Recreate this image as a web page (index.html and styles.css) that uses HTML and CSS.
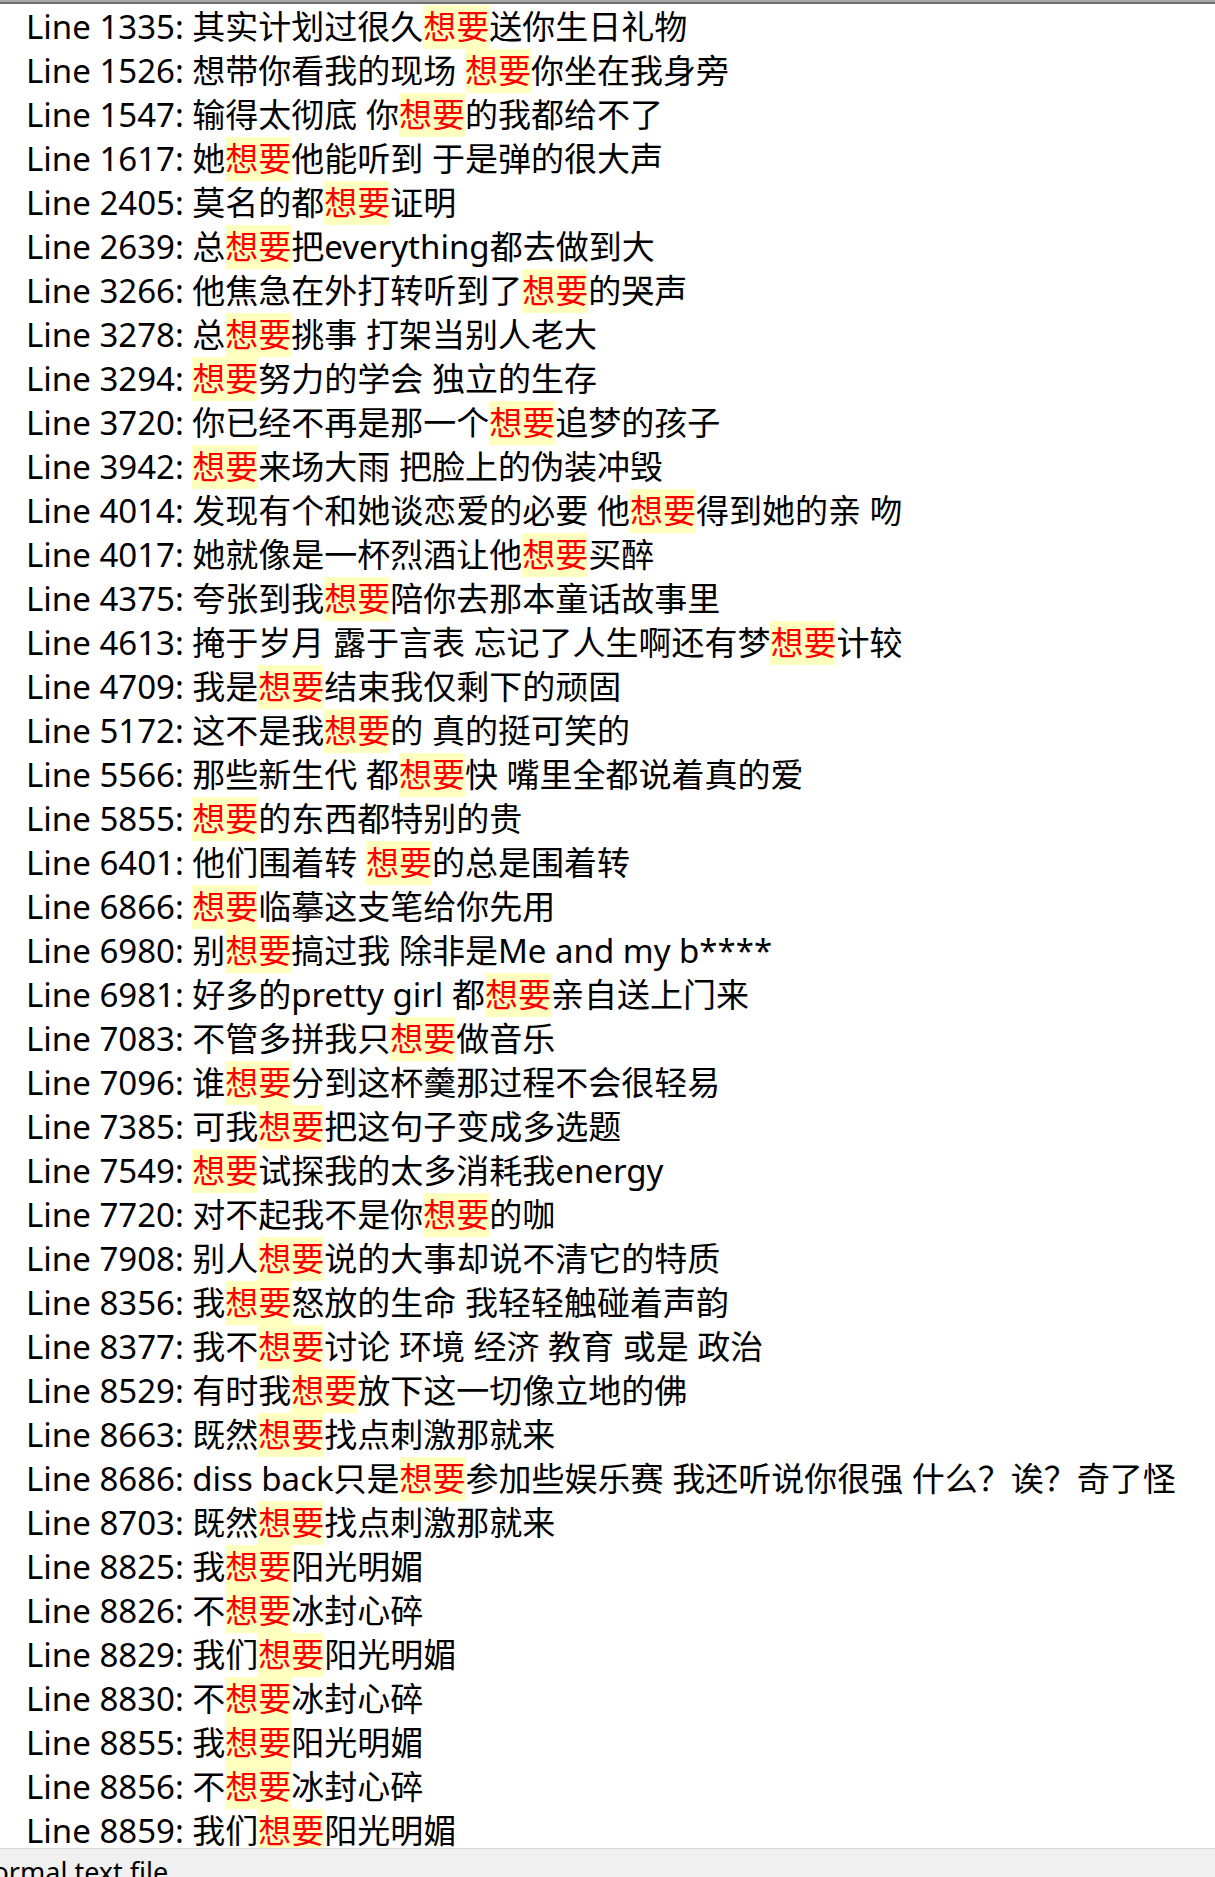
FILE: index.html
```html
<!DOCTYPE html>
<html lang="zh-CN">
<head>
<meta charset="utf-8">
<title>Search results</title>
<link rel="stylesheet" href="styles.css">
</head>
<body>
<div class="window">
  <div class="top-edge"></div>
  <div class="results">
    <div class="line">Line 1335: 其实计划过很久<span class="hit">想要</span>送你生日礼物</div>
    <div class="line">Line 1526: 想带你看我的现场 <span class="hit">想要</span>你坐在我身旁</div>
    <div class="line">Line 1547: 输得太彻底 你<span class="hit">想要</span>的我都给不了</div>
    <div class="line">Line 1617: 她<span class="hit">想要</span>他能听到 于是弹的很大声</div>
    <div class="line">Line 2405: 莫名的都<span class="hit">想要</span>证明</div>
    <div class="line">Line 2639: 总<span class="hit">想要</span>把everything都去做到大</div>
    <div class="line">Line 3266: 他焦急在外打转听到了<span class="hit">想要</span>的哭声</div>
    <div class="line">Line 3278: 总<span class="hit">想要</span>挑事 打架当别人老大</div>
    <div class="line">Line 3294: <span class="hit">想要</span>努力的学会 独立的生存</div>
    <div class="line">Line 3720: 你已经不再是那一个<span class="hit">想要</span>追梦的孩子</div>
    <div class="line">Line 3942: <span class="hit">想要</span>来场大雨 把脸上的伪装冲毁</div>
    <div class="line">Line 4014: 发现有个和她谈恋爱的必要 他<span class="hit">想要</span>得到她的亲 吻</div>
    <div class="line">Line 4017: 她就像是一杯烈酒让他<span class="hit">想要</span>买醉</div>
    <div class="line">Line 4375: 夸张到我<span class="hit">想要</span>陪你去那本童话故事里</div>
    <div class="line">Line 4613: 掩于岁月 露于言表 忘记了人生啊还有梦<span class="hit">想要</span>计较</div>
    <div class="line">Line 4709: 我是<span class="hit">想要</span>结束我仅剩下的顽固</div>
    <div class="line">Line 5172: 这不是我<span class="hit">想要</span>的 真的挺可笑的</div>
    <div class="line">Line 5566: 那些新生代 都<span class="hit">想要</span>快 嘴里全都说着真的爱</div>
    <div class="line">Line 5855: <span class="hit">想要</span>的东西都特别的贵</div>
    <div class="line">Line 6401: 他们围着转 <span class="hit">想要</span>的总是围着转</div>
    <div class="line">Line 6866: <span class="hit">想要</span>临摹这支笔给你先用</div>
    <div class="line">Line 6980: 别<span class="hit">想要</span>搞过我 除非是Me and my b****</div>
    <div class="line">Line 6981: 好多的pretty girl 都<span class="hit">想要</span>亲自送上门来</div>
    <div class="line">Line 7083: 不管多拼我只<span class="hit">想要</span>做音乐</div>
    <div class="line">Line 7096: 谁<span class="hit">想要</span>分到这杯羹那过程不会很轻易</div>
    <div class="line">Line 7385: 可我<span class="hit">想要</span>把这句子变成多选题</div>
    <div class="line">Line 7549: <span class="hit">想要</span>试探我的太多消耗我energy</div>
    <div class="line">Line 7720: 对不起我不是你<span class="hit">想要</span>的咖</div>
    <div class="line">Line 7908: 别人<span class="hit">想要</span>说的大事却说不清它的特质</div>
    <div class="line">Line 8356: 我<span class="hit">想要</span>怒放的生命 我轻轻触碰着声韵</div>
    <div class="line">Line 8377: 我不<span class="hit">想要</span>讨论 环境 经济 教育 或是 政治</div>
    <div class="line">Line 8529: 有时我<span class="hit">想要</span>放下这一切像立地的佛</div>
    <div class="line">Line 8663: 既然<span class="hit">想要</span>找点刺激那就来</div>
    <div class="line">Line 8686: diss back只是<span class="hit">想要</span>参加些娱乐赛 我还听说你很强 什么？诶？奇了怪</div>
    <div class="line">Line 8703: 既然<span class="hit">想要</span>找点刺激那就来</div>
    <div class="line">Line 8825: 我<span class="hit">想要</span>阳光明媚</div>
    <div class="line">Line 8826: 不<span class="hit">想要</span>冰封心碎</div>
    <div class="line">Line 8829: 我们<span class="hit">想要</span>阳光明媚</div>
    <div class="line">Line 8830: 不<span class="hit">想要</span>冰封心碎</div>
    <div class="line">Line 8855: 我<span class="hit">想要</span>阳光明媚</div>
    <div class="line">Line 8856: 不<span class="hit">想要</span>冰封心碎</div>
    <div class="line">Line 8859: 我们<span class="hit">想要</span>阳光明媚</div>
  </div>
  <div class="status-bar"><span class="status-text">Normal text file</span></div>
</div>
</body>
</html>
```

FILE: styles.css
```css
html, body {
  margin: 0;
  padding: 0;
  background: #ffffff;
}

.window {
  width: 1215px;
  height: 1877px;
  display: flex;
  flex-direction: column;
  overflow: hidden;
  font-family: "Noto Sans", "Noto Sans CJK SC", sans-serif;
  color: #000000;
}

.top-edge {
  flex: 0 0 4px;
  background: linear-gradient(to bottom, #a8a8a8 0, #a8a8a8 2px, #6e6e6e 2px, #6e6e6e 4px);
}

.results {
  flex: 1 1 auto;
  overflow: hidden;
  padding: 1px 0 0 26px;
  font-size: 33px;
  line-height: 44px;
}

.line {
  height: 44px;
  white-space: nowrap;
}

.hit {
  display: inline-block;
  color: #ff0000;
  background: #ffffbf;
  height: 44px;
  vertical-align: top;
}

.status-bar {
  flex: 0 0 29px;
  box-sizing: border-box;
  border-top: 1px solid #d7d7d7;
  background: #f0f0f0;
  overflow: hidden;
}

.status-text {
  display: block;
  margin-left: -28px;
  padding-top: 5px;
  font-family: "Noto Sans", sans-serif;
  font-size: 27px;
  line-height: 36px;
  white-space: nowrap;
}
```
